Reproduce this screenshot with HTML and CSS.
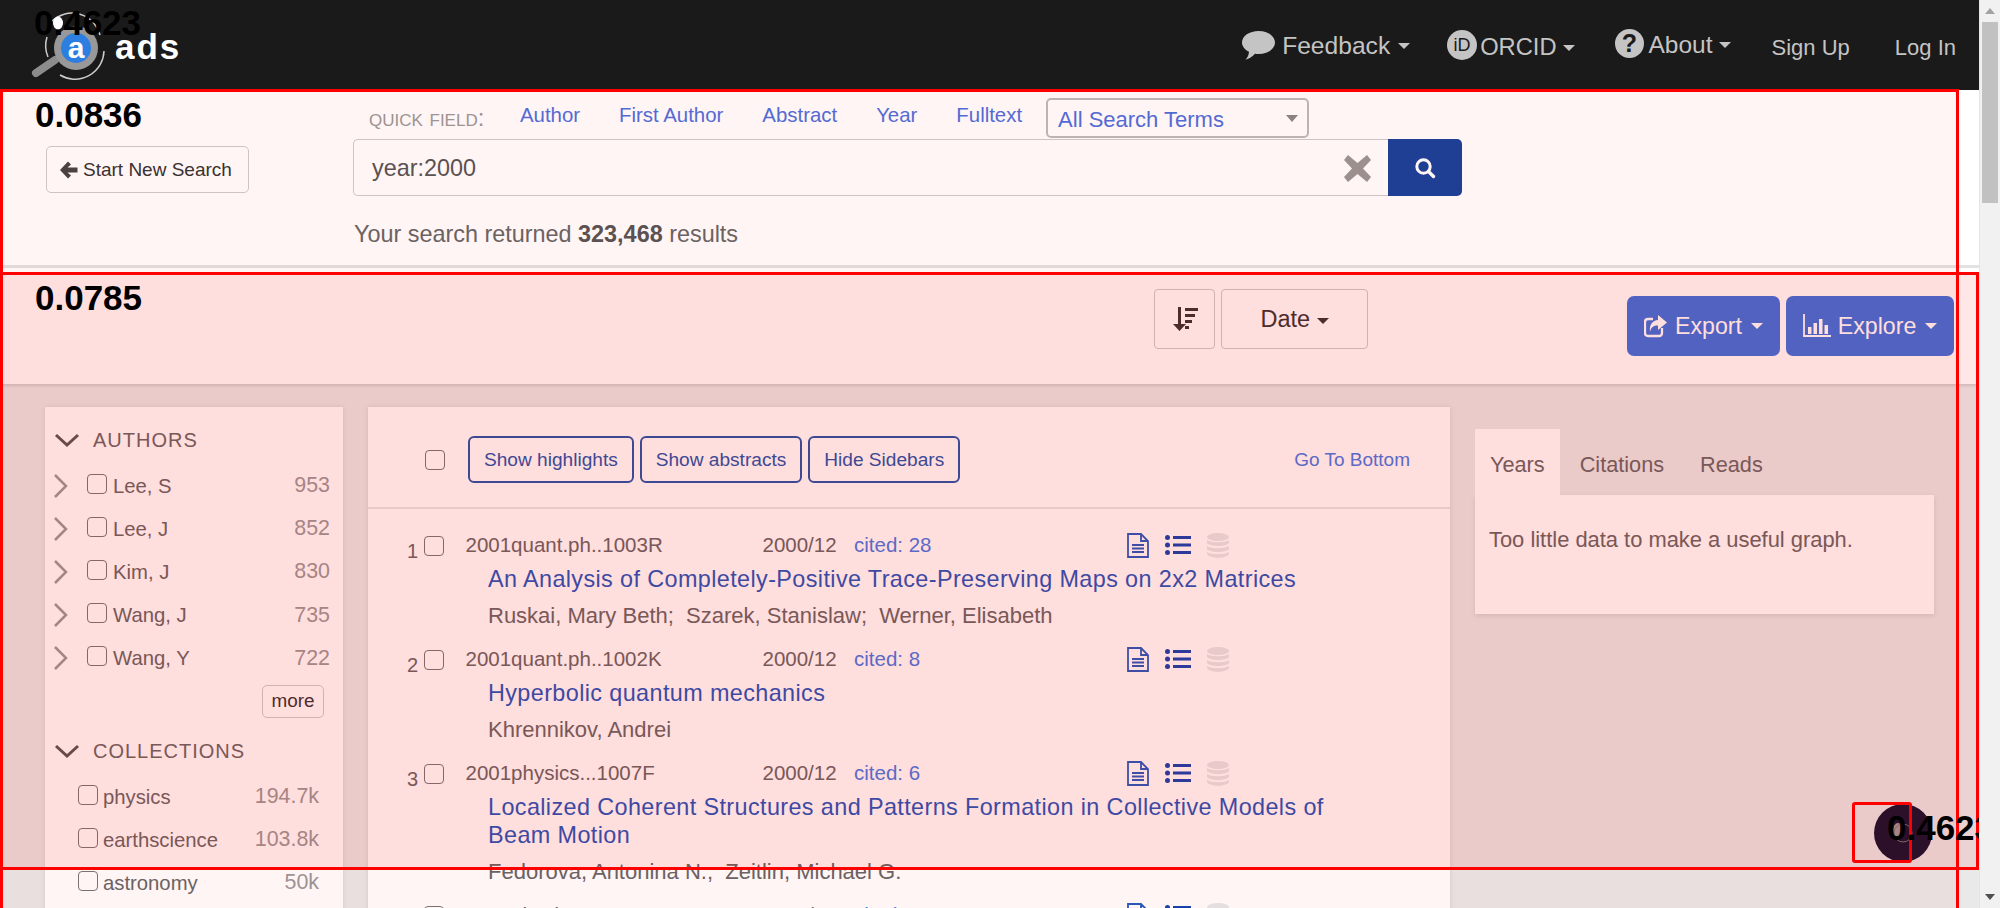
FILE: index.html
```html
<!DOCTYPE html>
<html lang="en">
<head>
  <meta charset="UTF-8" />
  <title>year:2000 - ads</title>
  <link rel="stylesheet" href="styles.css">
</head>
<body>
<div class="window">
<div class="page">

<!-- Top nav -->
<nav class="navbar">
  <a class="brand">
    <svg class="logo" width="75" height="80" viewBox="0 0 75 80">
      <path d="M22 16A29 29 0 0 1 70 30M74 46A29 29 0 0 1 30 70M18 52A29 29 0 0 1 17 32" fill="none" stroke="#ccc" stroke-width="1.5"/>
      <line x1="6" y1="68" x2="25" y2="55" stroke="#8c8c8c" stroke-width="8" stroke-linecap="round"/>
      <circle cx="46" cy="43" r="22" fill="#989898"/>
      <circle cx="46" cy="43" r="15" fill="#2c7ee0"/>
      <text x="46" y="53" text-anchor="middle" class="logo-a">a</text>
      <ellipse cx="28" cy="18" rx="5" ry="6.5" fill="#fff"/>
    </svg>
    <span class="brand-name">ads</span>
  </a>
  <div class="nav-right">
    <a class="nav-item nav-feedback">
      <svg width="33" height="29" viewBox="0 0 33 29"><path d="M16.5 0C25.6 0 33 5 33 11.5C33 18 25.6 23 16.5 23Q14.5 23 13 22.7C10.5 25.5 7 27.8 3.5 28.8C5.5 26.5 6.8 24 7 20.7C2.8 18.7 0 15.3 0 11.5C0 5 7.4 0 16.5 0Z" fill="#c4c4c4"/></svg>
      Feedback <i class="caret"></i>
    </a>
    <a class="nav-item nav-orcid">
      <svg width="30" height="30" viewBox="0 0 30 30"><circle cx="15" cy="15" r="15" fill="#c4c4c4"/><text x="15" y="21" text-anchor="middle" class="orcid-id">iD</text></svg>
      ORCID <i class="caret"></i>
    </a>
    <a class="nav-item nav-about">
      <svg width="29" height="29" viewBox="0 0 29 29"><circle cx="14.5" cy="14.5" r="14.5" fill="#c4c4c4"/><text x="14.5" y="23" text-anchor="middle" class="about-q">?</text></svg>
      About <i class="caret"></i>
    </a>
    <a class="nav-link signup">Sign Up</a>
    <a class="nav-link">Log In</a>
  </div>
</nav>

<!-- Search bar -->
<section class="search-section">
  <div class="search-left">
    <button class="btn-back">
      <svg width="18" height="18" viewBox="0 0 18 18"><path d="M8 0.5L11 3.5L7.5 6.5H17.5V11.5H7.5L11 14.5L8 17.5L0 9Z" fill="#444"/></svg>
      Start New Search
    </button>
  </div>
  <div class="search-main">
    <div class="quick-row">
      <span class="quick-label">quick field:</span>
      <a>Author</a><a>First Author</a><a>Abstract</a><a>Year</a><a>Fulltext</a>
      <div class="quick-select">All Search Terms<i class="select-caret"></i></div>
    </div>
    <div class="search-box">
      <div class="search-input">
        <span>year:2000</span>
        <svg width="27" height="27" viewBox="0 0 27 27"><path d="M4 0L13.5 8L23 0L27 5L19 13.5L27 22L23 27L13.5 19L4 27L0 22L8 13.5L0 5Z" fill="#9b9595"/></svg>
      </div>
      <button class="search-btn">
        <svg width="22" height="22" viewBox="0 0 22 22"><circle cx="9.5" cy="9.5" r="6.7" fill="none" stroke="#fff" stroke-width="3"/><line x1="14.5" y1="14.5" x2="19.5" y2="19.5" stroke="#fff" stroke-width="3.4" stroke-linecap="round"/></svg>
      </button>
    </div>
    <p class="result-count">Your search returned <b>323,468</b> results</p>
  </div>
</section>

<!-- Sort and actions -->
<section class="toolbar">
  <div class="sort-group">
    <button class="btn-sort">
      <svg width="26" height="24" viewBox="0 0 26 24"><path d="M6 0H9V17H14L7.5 24L1 17H6Z" fill="#333"/><path d="M13 1H26V4H13ZM13 7H23V10H13ZM13 13H20V16H13ZM13 19H17V22H13Z" fill="#333"/></svg>
    </button>
    <button class="btn-date">Date <i class="caret dark"></i></button>
  </div>
  <div class="action-group">
    <button class="btn-action export">
      <svg width="24" height="24" viewBox="0 0 24 24"><path d="M18 14V19Q18 22 15 22H4Q1 22 1 19V8Q1 5 4 5H9" fill="none" stroke="#fff" stroke-width="2.3"/><path d="M14 1L23 8.5L14 16V11.5C9.5 11.5 7 13 6 18C5 10 9 6.5 14 6Z" fill="#fff"/></svg>
      Export <i class="caret light"></i>
    </button>
    <button class="btn-action explore">
      <svg width="28" height="24" viewBox="0 0 28 24"><path d="M1 0V22H28" fill="none" stroke="#fff" stroke-width="1.8"/><path d="M5 13H8.5V20H5ZM10.5 9H14V20H10.5ZM16 5H19.5V20H16ZM21.5 11H25V20H21.5Z" fill="#fff"/></svg>
      Explore <i class="caret light"></i>
    </button>
  </div>
</section>

<!-- Facets, results, graph -->
<div class="content">
  <aside class="facets">
    <div class="facet-head">
      <svg class="chev-down" width="26" height="15" viewBox="0 0 26 15"><path d="M2 2L13 12L24 2" fill="none" stroke="#555" stroke-width="3"/></svg>
      AUTHORS
    </div>
    <div class="facet-row"><svg class="chev-right" width="15" height="24" viewBox="0 0 15 24"><path d="M2 1L13 12L2 23" fill="none" stroke="#999" stroke-width="2.5"/></svg><input type="checkbox"><span class="facet-name">Lee, S</span><span class="facet-count">953</span></div>
    <div class="facet-row"><svg class="chev-right" width="15" height="24" viewBox="0 0 15 24"><path d="M2 1L13 12L2 23" fill="none" stroke="#999" stroke-width="2.5"/></svg><input type="checkbox"><span class="facet-name">Lee, J</span><span class="facet-count">852</span></div>
    <div class="facet-row"><svg class="chev-right" width="15" height="24" viewBox="0 0 15 24"><path d="M2 1L13 12L2 23" fill="none" stroke="#999" stroke-width="2.5"/></svg><input type="checkbox"><span class="facet-name">Kim, J</span><span class="facet-count">830</span></div>
    <div class="facet-row"><svg class="chev-right" width="15" height="24" viewBox="0 0 15 24"><path d="M2 1L13 12L2 23" fill="none" stroke="#999" stroke-width="2.5"/></svg><input type="checkbox"><span class="facet-name">Wang, J</span><span class="facet-count">735</span></div>
    <div class="facet-row"><svg class="chev-right" width="15" height="24" viewBox="0 0 15 24"><path d="M2 1L13 12L2 23" fill="none" stroke="#999" stroke-width="2.5"/></svg><input type="checkbox"><span class="facet-name">Wang, Y</span><span class="facet-count">722</span></div>
    <div class="more-row"><button class="btn-more">more</button></div>
    <div class="facet-head collections">
      <svg class="chev-down" width="26" height="15" viewBox="0 0 26 15"><path d="M2 2L13 12L24 2" fill="none" stroke="#555" stroke-width="3"/></svg>
      COLLECTIONS
    </div>
    <div class="facet-row plain"><input type="checkbox"><span class="facet-name">physics</span><span class="facet-count">194.7k</span></div>
    <div class="facet-row plain"><input type="checkbox"><span class="facet-name">earthscience</span><span class="facet-count">103.8k</span></div>
    <div class="facet-row plain"><input type="checkbox"><span class="facet-name">astronomy</span><span class="facet-count">50k</span></div>
  </aside>

  <main class="results">
    <div class="results-head">
      <input type="checkbox">
      <button class="btn-outline">Show highlights</button>
      <button class="btn-outline">Show abstracts</button>
      <button class="btn-outline">Hide Sidebars</button>
      <a class="go-bottom">Go To Bottom</a>
    </div>
    <div class="result-list">

      <article class="result">
        <span class="result-index">1</span><input type="checkbox">
        <div class="result-body">
          <div class="result-meta">
            <span class="bibcode">2001quant.ph..1003R</span><span class="pubdate">2000/12</span><span class="cited">cited: 28</span>
            <span class="result-icons">
              <svg width="22" height="25" viewBox="0 0 22 25"><path d="M1 1H14L21 8V24H1Z M14 1V8H21 M5 12H17M5 15.5H17M5 19H17" fill="none" stroke="#225bc1" stroke-width="1.8"/></svg>
              <svg width="26" height="20" viewBox="0 0 26 20"><circle cx="2.5" cy="2.5" r="2.5" fill="#1044b1"/><circle cx="2.5" cy="10" r="2.5" fill="#1044b1"/><circle cx="2.5" cy="17.5" r="2.5" fill="#1044b1"/><path d="M8 1H26V4H8ZM8 8.5H26V11.5H8ZM8 16H26V19H8Z" fill="#1044b1"/></svg>
              <svg width="22" height="25" viewBox="0 0 22 25"><ellipse cx="11" cy="4" rx="11" ry="4" fill="#e5e9ea"/><path d="M0 7C3 10 19 10 22 7V10C19 14 3 14 0 10ZM0 13C3 16 19 16 22 13V16C19 20 3 20 0 16ZM0 19C3 22 19 22 22 19V21C19 26 3 26 0 21Z" fill="#e5e9ea"/></svg>
            </span>
          </div>
          <a class="result-title">An Analysis of Completely-Positive Trace-Preserving Maps on 2x2 Matrices</a>
          <div class="result-authors">Ruskai, Mary Beth;&nbsp; Szarek, Stanislaw;&nbsp; Werner, Elisabeth</div>
        </div>
      </article>

      <article class="result">
        <span class="result-index">2</span><input type="checkbox">
        <div class="result-body">
          <div class="result-meta">
            <span class="bibcode">2001quant.ph..1002K</span><span class="pubdate">2000/12</span><span class="cited">cited: 8</span>
            <span class="result-icons">
              <svg width="22" height="25" viewBox="0 0 22 25"><path d="M1 1H14L21 8V24H1Z M14 1V8H21 M5 12H17M5 15.5H17M5 19H17" fill="none" stroke="#225bc1" stroke-width="1.8"/></svg>
              <svg width="26" height="20" viewBox="0 0 26 20"><circle cx="2.5" cy="2.5" r="2.5" fill="#1044b1"/><circle cx="2.5" cy="10" r="2.5" fill="#1044b1"/><circle cx="2.5" cy="17.5" r="2.5" fill="#1044b1"/><path d="M8 1H26V4H8ZM8 8.5H26V11.5H8ZM8 16H26V19H8Z" fill="#1044b1"/></svg>
              <svg width="22" height="25" viewBox="0 0 22 25"><ellipse cx="11" cy="4" rx="11" ry="4" fill="#e5e9ea"/><path d="M0 7C3 10 19 10 22 7V10C19 14 3 14 0 10ZM0 13C3 16 19 16 22 13V16C19 20 3 20 0 16ZM0 19C3 22 19 22 22 19V21C19 26 3 26 0 21Z" fill="#e5e9ea"/></svg>
            </span>
          </div>
          <a class="result-title">Hyperbolic quantum mechanics</a>
          <div class="result-authors">Khrennikov, Andrei</div>
        </div>
      </article>

      <article class="result">
        <span class="result-index">3</span><input type="checkbox">
        <div class="result-body">
          <div class="result-meta">
            <span class="bibcode">2001physics...1007F</span><span class="pubdate">2000/12</span><span class="cited">cited: 6</span>
            <span class="result-icons">
              <svg width="22" height="25" viewBox="0 0 22 25"><path d="M1 1H14L21 8V24H1Z M14 1V8H21 M5 12H17M5 15.5H17M5 19H17" fill="none" stroke="#225bc1" stroke-width="1.8"/></svg>
              <svg width="26" height="20" viewBox="0 0 26 20"><circle cx="2.5" cy="2.5" r="2.5" fill="#1044b1"/><circle cx="2.5" cy="10" r="2.5" fill="#1044b1"/><circle cx="2.5" cy="17.5" r="2.5" fill="#1044b1"/><path d="M8 1H26V4H8ZM8 8.5H26V11.5H8ZM8 16H26V19H8Z" fill="#1044b1"/></svg>
              <svg width="22" height="25" viewBox="0 0 22 25"><ellipse cx="11" cy="4" rx="11" ry="4" fill="#e5e9ea"/><path d="M0 7C3 10 19 10 22 7V10C19 14 3 14 0 10ZM0 13C3 16 19 16 22 13V16C19 20 3 20 0 16ZM0 19C3 22 19 22 22 19V21C19 26 3 26 0 21Z" fill="#e5e9ea"/></svg>
            </span>
          </div>
          <a class="result-title">Localized Coherent Structures and Patterns Formation in Collective Models of Beam Motion</a>
          <div class="result-authors">Fedorova, Antonina N.;&nbsp; Zeitlin, Michael G.</div>
        </div>
      </article>

      <article class="result">
        <span class="result-index">4</span><input type="checkbox">
        <div class="result-body">
          <div class="result-meta">
            <span class="bibcode">2001physics...1006Z</span><span class="pubdate">2000/12</span><span class="cited">cited: 29</span>
            <span class="result-icons">
              <svg width="22" height="25" viewBox="0 0 22 25"><path d="M1 1H14L21 8V24H1Z M14 1V8H21 M5 12H17M5 15.5H17M5 19H17" fill="none" stroke="#225bc1" stroke-width="1.8"/></svg>
              <svg width="26" height="20" viewBox="0 0 26 20"><circle cx="2.5" cy="2.5" r="2.5" fill="#1044b1"/><circle cx="2.5" cy="10" r="2.5" fill="#1044b1"/><circle cx="2.5" cy="17.5" r="2.5" fill="#1044b1"/><path d="M8 1H26V4H8ZM8 8.5H26V11.5H8ZM8 16H26V19H8Z" fill="#1044b1"/></svg>
              <svg width="22" height="25" viewBox="0 0 22 25"><ellipse cx="11" cy="4" rx="11" ry="4" fill="#e5e9ea"/><path d="M0 7C3 10 19 10 22 7V10C19 14 3 14 0 10ZM0 13C3 16 19 16 22 13V16C19 20 3 20 0 16ZM0 19C3 22 19 22 22 19V21C19 26 3 26 0 21Z" fill="#e5e9ea"/></svg>
            </span>
          </div>
        </div>
      </article>

    </div>
  </main>

  <aside class="graphs">
    <div class="tabs">
      <a class="tab active">Years</a>
      <a class="tab">Citations</a>
      <a class="tab">Reads</a>
    </div>
    <div class="tab-panel">Too little data to make a useful graph.</div>
  </aside>
</div>

<!-- Chat launcher -->
<div class="chat-bubble">
  <svg width="58" height="58" viewBox="0 0 58 58"><ellipse cx="24" cy="27" rx="5" ry="8" fill="#9a9a9a"/><circle cx="29" cy="29" r="9" fill="none" stroke="#77737c" stroke-width="1"/></svg>
</div>

<!-- Detection boxes drawn over the page -->
<div class="score-box box-nav"><span class="score">0.4623</span></div>
<div class="score-box box-search"><span class="score">0.0836</span></div>
<div class="score-box box-main"><span class="score">0.0785</span></div>
<div class="score-box box-chat"><span class="score">0.4623</span></div>

</div>

<!-- Window scrollbar -->
<div class="scrollbar">
  <i class="arrow-up"></i>
  <div class="scroll-track"><div class="scroll-thumb"></div></div>
  <i class="arrow-down"></i>
</div>
</div>
</body>
</html>
```

FILE: styles.css
```css
* {
  box-sizing: border-box;
}
html, body {
  margin: 0;
  padding: 0;
  height: 908px;
  overflow: hidden;
}
body {
  font-family: "Liberation Sans", Arial, sans-serif;
  color: #666;
  background: #fff;
}
button {
  font-family: inherit;
  cursor: pointer;
}
input[type="checkbox"] {
  appearance: none;
  flex: none;
  width: 20px;
  height: 20px;
  margin: 0;
  background: #fff;
  border: 1.5px solid #767676;
  border-radius: 4px;
}
.window {
  display: flex;
  height: 908px;
}
.page {
  position: relative;
  flex: 1;
  min-width: 0;
  overflow: hidden;
}

/* nav */
.navbar {
  display: flex;
  height: 90px;
  background: #1a1a1a;
  color: #c4c4c4;
  padding-right: 23px;
}
.brand {
  display: flex;
  align-items: flex-start;
  padding: 5px 0 0 30px;
}
.logo-a {
  font: bold 30px "Liberation Sans", sans-serif;
  fill: #fff;
}
.brand-name {
  margin: 22px 0 0 10px;
  color: #fff;
  font-size: 35px;
  font-weight: bold;
  letter-spacing: 2px;
  line-height: 40px;
}
.nav-right {
  display: flex;
  align-items: center;
  margin-left: auto;
}
.nav-item {
  display: flex;
  align-items: center;
  gap: 5px;
  height: 30px;
  font-size: 24px;
}
.nav-feedback {
  gap: 7px;
  margin-top: 1px;
  font-size: 24.6px;
}
.nav-orcid {
  gap: 3px;
  margin-left: 37px;
  margin-top: 5px;
  font-size: 23.7px;
}
.nav-orcid .caret {
  margin-left: 3px;
}
.nav-orcid svg {
  margin-top: -6px;
}
.nav-about {
  margin-left: 40px;
  font-size: 24.5px;
}
.nav-about svg {
  margin-top: -3px;
}
.nav-link {
  margin-top: 5px;
  font-size: 22px;
}
.nav-link.signup {
  margin: 5px 45px 0 41px;
}
.orcid-id {
  font: 18px "Liberation Sans", sans-serif;
  fill: #1a1a1a;
}
.about-q {
  font: bold 25px "Liberation Sans", sans-serif;
  fill: #1a1a1a;
}
.caret {
  display: inline-block;
  width: 0;
  height: 0;
  margin-left: 1px;
  border-top: 6px solid #c4c4c4;
  border-left: 6px solid transparent;
  border-right: 6px solid transparent;
}
.caret.dark {
  border-top-color: #333;
  margin-left: 0;
  vertical-align: 3px;
}
.caret.light {
  border-top-color: #fff;
  margin-left: 2px;
}

/* search */
.search-section {
  display: flex;
  height: 178px;
  border-bottom: 3px solid #e2e2e2;
}
.search-left {
  width: 353px;
  padding: 56px 0 0 46px;
}
.btn-back {
  display: flex;
  align-items: center;
  gap: 5px;
  width: 203px;
  height: 47px;
  padding: 0 0 0 13px;
  background: #fff;
  border: 1.5px solid #ccc;
  border-radius: 5px;
  color: #333;
  font-size: 19px;
}
.search-main {
  flex: 1;
}
.quick-row {
  display: flex;
  align-items: center;
  height: 49px;
  padding-top: 7px;
  font-size: 20.4px;
  color: #4e6fdc;
}
.quick-row a {
  margin-right: 39px;
  padding-bottom: 6px;
}
.quick-label {
  width: 167px;
  padding-left: 16px;
  color: #999;
  font-size: 24px;
  font-variant: small-caps;
}
.quick-select {
  position: relative;
  width: 263px;
  height: 40px;
  margin-left: -15px;
  padding: 7px 0 0 10px;
  border: 2px solid #bbb;
  border-radius: 5px;
  background: #fff;
  font-size: 22px;
  line-height: 26px;
}
.select-caret {
  position: absolute;
  right: 9px;
  top: 15px;
  border-top: 7px solid #888;
  border-left: 6px solid transparent;
  border-right: 6px solid transparent;
}
.search-box {
  display: flex;
  width: 1109px;
  height: 57px;
}
.search-input {
  flex: 1;
  display: flex;
  align-items: center;
  justify-content: space-between;
  padding: 1px 17px 0 18px;
  border: 1.5px solid #ccc;
  border-right: 0;
  border-radius: 5px 0 0 5px;
  font-size: 23.4px;
  color: #555;
}
.search-btn {
  width: 74px;
  border: 0;
  border-radius: 0 5px 5px 0;
  background: #16429b;
}
.search-btn svg {
  display: block;
  margin: 0 auto;
}
.result-count {
  margin: 24px 0 0 1px;
  font-size: 23.4px;
  line-height: 28px;
}
.result-count b {
  color: #555;
}

/* sort + export row */
.toolbar {
  position: relative;
  display: flex;
  justify-content: space-between;
  height: 116px;
  padding: 21px 25px 0 1154px;
  background: #fff;
  box-shadow: 0 2px 3px rgba(0, 0, 0, 0.12);
}
.sort-group {
  display: flex;
  gap: 6px;
  height: 60px;
}
.btn-sort, .btn-date {
  background: #fff;
  border: 1.5px solid #ccc;
  border-radius: 4px;
  color: #333;
}
.btn-sort {
  width: 61px;
  padding: 0;
}
.btn-sort svg {
  display: block;
  margin: 0 auto;
}
.btn-date {
  width: 147px;
  font-size: 23.5px;
}
.action-group {
  display: flex;
  gap: 6px;
  padding-top: 7px;
}
.btn-action {
  display: flex;
  align-items: center;
  justify-content: center;
  gap: 7px;
  height: 60px;
  padding: 0;
  background: #3a72de;
  border: 0;
  border-radius: 7px;
  color: #fff;
  font-size: 23.2px;
}
.btn-action.export {
  width: 153px;
}
.btn-action.explore {
  width: 168px;
}

/* three columns */
.content {
  display: flex;
  align-items: flex-start;
  gap: 25px;
  height: 524px;
  padding: 23px 0 0 45px;
  background: #e9e9e9;
  overflow: hidden;
}
.facets {
  width: 298px;
  height: 520px;
  padding: 20px 13px 0 9px;
  background: #fff;
  box-shadow: 0 0 5px rgba(0, 0, 0, 0.1);
  flex: none;
}
.facet-head {
  display: flex;
  align-items: center;
  gap: 13px;
  height: 26px;
  font-size: 20px;
  letter-spacing: 1px;
}
.collections {
  margin-top: 21px;
}
.facet-row {
  display: flex;
  align-items: center;
  height: 43.2px;
  font-size: 20.3px;
}
.facet-row:nth-child(2) {
  margin-top: 11px;
}
.chev-right {
  margin-right: 19px;
  flex: none;
  margin-left: -1px;
}
.facet-row input {
  margin: -4px 6px 0 0;
}
.facet-name {
  padding-top: 1px;
}
.facet-count {
  margin-left: auto;
  color: #999;
  font-size: 21.4px;
}
.facet-row.plain {
  padding: 0 11px 0 24px;
}
.facet-row.plain input {
  margin-right: 5px;
}
.facet-head + .facet-row.plain {
  margin-top: 10px;
}
.more-row {
  display: flex;
  justify-content: flex-end;
  padding: 5px 6px 0 0;
}
.btn-more {
  width: 62px;
  height: 33px;
  padding: 0;
  background: #fff;
  border: 1.5px solid #ccc;
  border-radius: 5px;
  color: #333;
  font-size: 18.9px;
}

.results {
  width: 1082px;
  height: 520px;
  background: #fff;
  box-shadow: 0 0 5px rgba(0, 0, 0, 0.1);
  flex: none;
}
.results-head {
  display: flex;
  align-items: center;
  height: 102px;
  padding: 5px 40px 0 57px;
  border-bottom: 2px solid #e8e8e8;
}
.results-head input {
  margin-right: 23px;
}
.btn-outline {
  height: 47px;
  padding: 0 14px;
  margin-right: 6px;
  background: #fff;
  border: 2px solid #2255aa;
  border-radius: 6px;
  color: #2255aa;
  font-size: 19.1px;
}
.go-bottom {
  margin-left: auto;
  color: #447be4;
  font-size: 19px;
}
.result-list {
  padding-top: 22px;
}
.result {
  display: flex;
  align-items: flex-start;
  padding-bottom: 15px;
}
.result-index {
  width: 50px;
  padding-top: 6px;
  text-align: right;
  font-size: 20px;
  line-height: 28px;
}
.result > input {
  margin: 5px 21.5px 0 6px;
}
.result-body {
  flex: 1;
  min-width: 0;
}
.result-meta {
  display: flex;
  align-items: center;
  height: 28px;
  font-size: 20.5px;
}
.bibcode {
  width: 297px;
}
.pubdate {
  width: 91.5px;
}
.cited {
  width: 273px;
  color: #447be4;
}
.result-icons {
  display: flex;
  align-items: center;
  gap: 16px;
}
.result-title {
  display: block;
  width: 850px;
  margin: 6px 0 0 22.5px;
  color: #1f56bb;
  font-size: 23.4px;
  line-height: 28px;
  letter-spacing: 0.39px;
}
.result-authors {
  margin: 9px 0 0 22.5px;
  font-size: 22px;
  line-height: 28px;
}

.graphs {
  width: 459px;
  padding-top: 22px;
  flex: none;
}
.tabs {
  display: flex;
  height: 66px;
}
.tab {
  padding: 23px 18px 0;
  font-size: 21.7px;
  line-height: 26px;
}
.tab:nth-child(2) {
  padding-left: 20px;
}
.tab.active {
  padding: 23px 15px 0;
  background: #fff;
}
.tab-panel {
  height: 119px;
  padding: 32px 14px 0;
  background: #fff;
  box-shadow: 0 2px 5px rgba(0, 0, 0, 0.1);
  font-size: 21.9px;
  line-height: 26px;
}

/* chat launcher */
.chat-bubble {
  position: absolute;
  left: 1874px;
  top: 804px;
  width: 58px;
  height: 58px;
  border-radius: 50%;
  background: #0e1230;
}

/* red detection boxes */
.score-box {
  position: absolute;
  border: 3px solid #f00;
  pointer-events: none;
}
.score {
  position: absolute;
  left: 32px;
  top: 3px;
  color: #000;
  font-size: 35px;
  font-weight: bold;
  line-height: 39px;
  white-space: nowrap;
}
.box-nav {
  left: 0;
  top: 0;
  width: 1979px;
  height: 90px;
  border: 0;
}
.box-nav .score {
  left: 34px;
  top: 3px;
}
.box-search {
  left: 0;
  top: 89px;
  width: 1959px;
  height: 900px;
  background: rgba(255, 0, 0, 0.04);
}
.box-main {
  left: 0;
  top: 272px;
  width: 1979px;
  height: 598px;
  background: rgba(255, 0, 0, 0.094);
}
.box-chat {
  left: 1852px;
  top: 802px;
  width: 60px;
  height: 61px;
  border-radius: 3px;
}

/* fake window scrollbar */
.scrollbar {
  display: flex;
  flex-direction: column;
  align-items: center;
  width: 21px;
  flex: none;
  background: #f1f1f1;
  border-left: 1px solid #e4e4e4;
}
.arrow-up, .arrow-down {
  width: 0;
  height: 0;
  margin: 8px 0;
  border-left: 5px solid transparent;
  border-right: 5px solid transparent;
}
.arrow-up {
  border-bottom: 6px solid #a3a3a3;
}
.arrow-down {
  border-top: 6px solid #505050;
}
.scroll-track {
  flex: 1;
  width: 100%;
  padding: 0 2px;
}
.scroll-thumb {
  height: 181px;
  background: #c1c1c1;
}
```
